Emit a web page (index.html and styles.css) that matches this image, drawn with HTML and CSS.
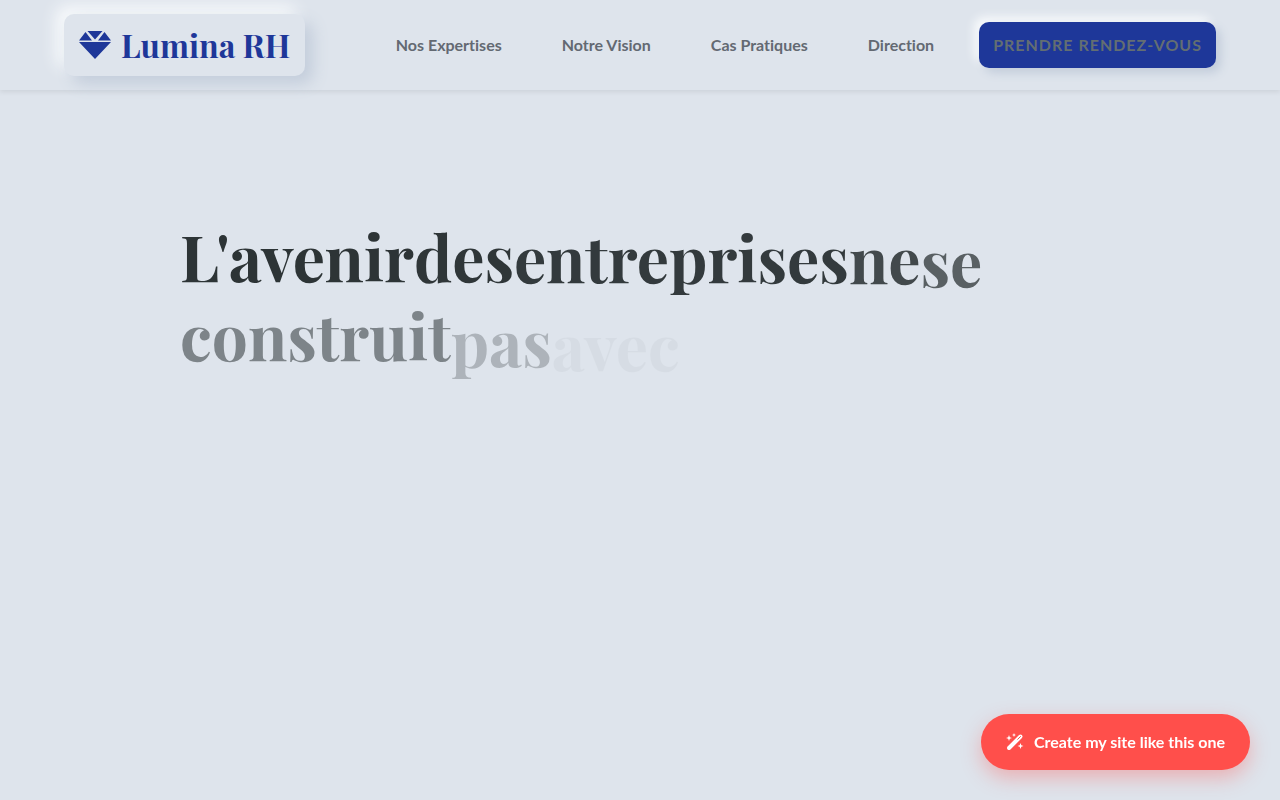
FILE: index.html
```html
<!DOCTYPE html>
<html lang="fr">
<head>
  <meta charset="UTF-8">
  <meta name="viewport" content="width=device-width, initial-scale=1.0">
  <title>Lumina RH</title>
  <link rel="stylesheet" href="styles.css">
</head>
<body>
  <header class="header">
    <a href="#" class="logo">
      <svg class="logo-icon" viewBox="0 0 32 30" aria-hidden="true">
        <path d="M6.5 2 13 10.500H0zM8.500 1h15L16 9.500zM25.500 2 32 10.500H19zM0 12h32L16 29z"/>
      </svg>
      <span>Lumina RH</span>
    </a>
    <nav class="nav">
      <a href="#expertises">Nos Expertises</a>
      <a href="#vision">Notre Vision</a>
      <a href="#cas">Cas Pratiques</a>
      <a href="#direction">Direction</a>
      <a href="#contact" class="nav-cta">Prendre rendez-vous</a>
    </nav>
  </header>

  <main class="hero">
    <!-- --reveal: how far each word has faded in -->
    <h1 class="hero-title">
      <span class="word" style="--reveal: 1">L'avenir</span>
      <span class="word" style="--reveal: 0.99">des</span>
      <span class="word" style="--reveal: 0.96">entreprises</span>
      <span class="word" style="--reveal: 0.88">ne</span>
      <span class="word" style="--reveal: 0.75">se</span>
      <span class="word" style="--reveal: 0.54">construit</span>
      <span class="word" style="--reveal: 0.27">pas</span>
      <span class="word" style="--reveal: 0.04">avec</span>
    </h1>
  </main>

  <button type="button" class="create-btn">
    <svg class="create-icon" viewBox="0 0 18 18" aria-hidden="true">
      <path class="wand" d="M3 15 14.5 3.5"/>
      <path class="wand-tip" d="M11.7 6.3 14.5 3.5"/>
      <path class="spark" d="M3 2l.8 2.2L6 5l-2.2.8L3 8l-.8-2.2L0 5l2.200-.8zM8 0l.6 1.400L10 2l-1.400.6L8 4l-.6-1.400L6 2l1.400-.6zM14.500 10l.8 2.200 2.200.8-2.200.8-.8 2.200-.8-2.200-2.200-.8 2.200-.8z"/>
    </svg>
    <span>Create my site like this one</span>
  </button>
</body>
</html>
```

FILE: styles.css
```css
:root {
  --bg: #dee4ec;
  --primary: #1e3799;
  --text: #2d3436;
  --muted: #636e72;
  --coral: #ff4f4b;
}

* {
  box-sizing: border-box;
}

body {
  margin: 0;
  min-height: 100vh;
  background: var(--bg);
  color: var(--text);
  font-family: Lato, sans-serif;
  font-variant-ligatures: none;
}

a {
  color: inherit;
  text-decoration: none;
}

/* Header */
.header {
  display: flex;
  align-items: center;
  justify-content: space-between;
  padding: 14px 5%;
  box-shadow: 0 2px 5px rgba(0, 0, 0, 0.08);
}

.logo {
  display: flex;
  align-items: center;
  gap: 10px;
  padding: 8px 15px;
  border-radius: 10px;
  background: var(--bg);
  box-shadow: 8px 8px 16px #c3cddb, -8px -8px 16px #f8fafc;
  color: var(--primary);
  font-family: "Playfair Display", "Liberation Serif", serif;
  font-size: 32px;
  font-weight: 700;
  line-height: 46px;
}

.logo-icon {
  width: 32px;
  height: 30px;
  fill: currentColor;
}

.nav {
  display: flex;
  align-items: center;
  gap: 60px;
  color: #636972;
  font-size: 16px;
  font-weight: 700;
  line-height: 22px;
}

.nav-cta {
  margin-left: -15px;
  padding: 12px 14px;
  border-radius: 10px;
  background: var(--primary);
  box-shadow: 5px 5px 10px #c3cddb, -5px -5px 10px #f8fafc;
  color: var(--muted);
  letter-spacing: 1px;
  text-transform: uppercase;
}

/* Hero */
.hero {
  max-width: 920px;
  margin: 0 auto;
  padding: 131px 0;
}

.hero-title {
  display: flex;
  flex-wrap: wrap;
  margin: 0;
  font-family: "Playfair Display", "Liberation Serif", serif;
  font-size: 64px;
  font-weight: 700;
  line-height: 70px;
}

.word {
  opacity: var(--reveal);
  transform: translateY(calc((1 - var(--reveal)) * 20px));
}

/* Floating button */
.create-btn {
  position: fixed;
  right: 30px;
  bottom: 30px;
  display: flex;
  align-items: center;
  gap: 10px;
  padding: 16px 25px;
  border: 0;
  border-radius: 28px;
  background: var(--coral);
  box-shadow: 0 8px 20px rgba(255, 79, 75, 0.35);
  color: #fff;
  font-family: inherit;
  font-size: 16px;
  font-weight: 700;
  line-height: 24px;
  cursor: pointer;
}

.create-icon {
  width: 18px;
  height: 18px;
  fill: #fff;
}

.wand {
  stroke: #fff;
  stroke-width: 4;
  stroke-linecap: round;
}

.wand-tip {
  stroke: var(--coral);
  stroke-width: 1;
  stroke-linecap: round;
}
```
